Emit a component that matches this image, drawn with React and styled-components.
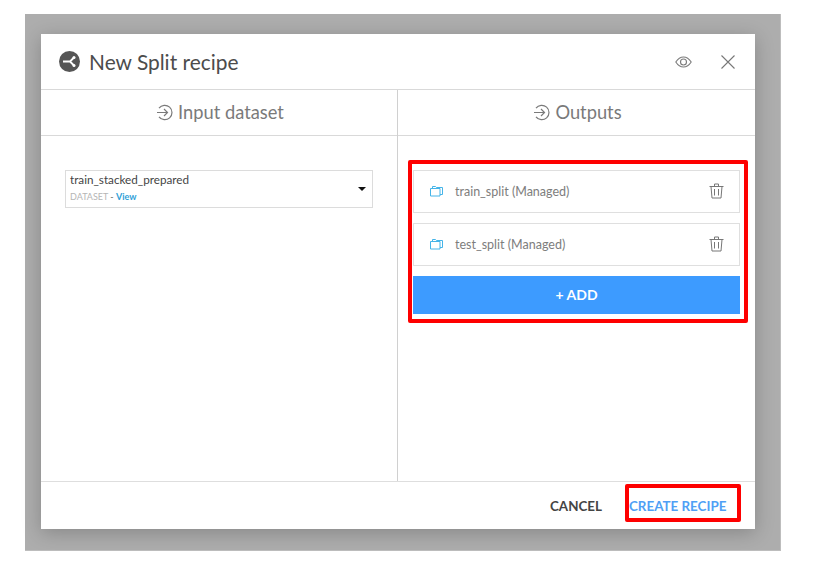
import React from 'react'
import styled, { createGlobalStyle } from 'styled-components'

const Global = createGlobalStyle`
  html, body { margin: 0; padding: 0; background: #fff; }
  body { font-family: "Lato", "Noto Sans", sans-serif; }
`

const Backdrop = styled.div`
  box-sizing: border-box;
  width: 756px;
  height: 537px;
  margin: 14px 0 0 25px;
  padding: 20px 0 0 16px;
  background: #adadad;
  border-right: 1px solid #bdbdbd;
  border-bottom: 1px solid #bdbdbd;
`

const Modal = styled.div`
  width: 714px;
  height: 495px;
  background: #fff;
  display: flex;
  flex-direction: column;
  box-shadow: 0 4px 18px rgba(0, 0, 0, 0.22);
`

const Header = styled.div`
  box-sizing: border-box;
  height: 56px;
  flex: none;
  display: flex;
  align-items: center;
  padding: 0 20px 0 18px;
  border-bottom: 1px solid #d9d9d9;
`

const Title = styled.h1`
  margin: 0 0 0 9px;
  flex: 1;
  font-size: 20.9px;
  font-weight: 400;
  color: #4c4c4c;
`

const HeaderAction = styled.button`
  border: 0;
  background: none;
  padding: 0;
  margin-left: ${(p) => p.$gap}px;
  display: flex;
  color: #7b7b7b;
`

const Columns = styled.div`
  flex: 1;
  display: grid;
  grid-template-columns: 356px 1fr;
  min-height: 0;
`

const Column = styled.section`
  display: flex;
  flex-direction: column;
  & + & { border-left: 1px solid #d0d0d0; }
`

const ColumnTitle = styled.div`
  box-sizing: border-box;
  height: 46px;
  flex: none;
  display: flex;
  align-items: center;
  justify-content: center;
  gap: 5px;
  padding: 0 0 1px 2px;
  font-size: 18.3px;
  color: #7a7a7a;
  border-bottom: 1px solid #d9d9d9;
`

const InputBody = styled.div`
  padding: 34px 24px 0;
`

const Select = styled.div`
  box-sizing: border-box;
  height: 38px;
  display: flex;
  align-items: center;
  justify-content: space-between;
  padding: 0 6px 0 4px;
  border: 1px solid #dcdcdc;
`

const SelectName = styled.div`
  font-size: 11.7px;
  line-height: 15px;
  margin-top: -3px;
  color: #444;
`

const SelectMeta = styled.div`
  font-size: 9px;
  line-height: 13px;
  margin-top: 3px;
  color: #b5b5b5;
  a { color: #2f9fd8; font-weight: 700; text-decoration: none; }
  span { color: #666; }
`

const Caret = styled.div`
  width: 0;
  height: 0;
  border-left: 4px solid transparent;
  border-right: 4px solid transparent;
  border-top: 4px solid #111;
`

const RedFrame = styled.div`
  box-sizing: border-box;
  border: 4px solid #fe0000;
  border-radius: 2px;
`

const OutputsFrame = styled(RedFrame)`
  width: 340px;
  height: 163px;
  margin: 24px 0 0 10px;
  padding: 6px 4px 0 1px;
  display: flex;
  flex-direction: column;
  gap: 10px;
`

const OutputRow = styled.div`
  box-sizing: border-box;
  height: 43px;
  flex: none;
  display: flex;
  align-items: center;
  padding: 0 15px 1px 16px;
  border: 1px solid #dfdfdf;
`

const OutputName = styled.span`
  flex: 1;
  margin-left: 12px;
  font-size: 12.5px;
  color: #7d7d7d;
`

const AddButton = styled.button`
  height: 38px;
  flex: none;
  border: 0;
  padding: 0 0 2px;
  background: #3d9bff;
  color: #fff;
  font: 700 14px "Lato", "Noto Sans", sans-serif;
`

const Footer = styled.div`
  box-sizing: border-box;
  height: 48px;
  flex: none;
  display: flex;
  align-items: center;
  justify-content: flex-end;
  padding: 0 14px 0 0;
  border-top: 1px solid #dedede;
`

const FooterButton = styled.button`
  border: 0;
  background: none;
  padding: 0;
  font: 700 13.4px "Lato", "Noto Sans", sans-serif;
  color: ${(p) => p.$color};
`

const CreateFrame = styled(RedFrame)`
  width: 116px;
  height: 38px;
  margin: 0 0 6px 23px;
  padding-top: 6px;
  display: flex;
  align-items: center;
`

const SplitIcon = () => (
  <svg width="21" height="21" viewBox="0 0 21 21">
    <circle cx="10.5" cy="10.5" r="10.5" fill="#565656" />
    <path d="M4 10.5h7M11 10.5l4-4M11 10.5l4 4" stroke="#fff" strokeWidth="1.8" fill="none" />
    <circle cx="15" cy="6.5" r="1.5" fill="#fff" />
    <circle cx="15" cy="14.5" r="1.5" fill="#fff" />
  </svg>
)

const EyeIcon = () => (
  <svg width="17" height="12" viewBox="0 0 17 12" fill="none" stroke="currentColor" strokeWidth="1.1">
    <path d="M.8 6C3 2.6 5.6 1 8.5 1s5.500 1.600 7.700 5c-2.200 3.400-4.800 5-7.700 5S3 9.400.8 6z" />
    <circle cx="8.500" cy="6" r="3" />
  </svg>
)

const CloseIcon = () => (
  <svg width="14" height="14" viewBox="0 0 14 14" stroke="#777" strokeWidth="1.1">
    <path d="M.5.5l13 13M13.500.5l-13 13" />
  </svg>
)

const EnterIcon = () => (
  <svg width="17" height="17" viewBox="0 0 17 17" fill="none" stroke="#7a7a7a" strokeWidth="1.2">
    <path d="M3 4.200A7.200 7.200 0 1 1 3 12.800" />
    <path d="M1 8.500h10.500M8 5l3.500 3.500L8 12" />
  </svg>
)

const FolderIcon = () => (
  <svg width="13" height="12" viewBox="0 0 13 12" fill="none" stroke="#45b4e8" strokeWidth="1">
    <path d="M.5 3.500h9.500v7.500H.5z" />
    <path d="M2.500 3.500V1.500h3l1 1h6v7H10" />
  </svg>
)

const TrashIcon = () => (
  <svg width="15" height="16" viewBox="0 0 15 16" fill="none" stroke="#777" strokeWidth="1">
    <path d="M.5 3.500h14M5.500 3.500v-2.500h4v2.500M2 3.500l1 11.500h9l1-11.500M5.500 6v6.500M9.500 6v6.500" />
  </svg>
)

const outputs = ['train_split (Managed)', 'test_split (Managed)']

export default function App() {
  return (
    <>
      <Global />
      <Backdrop>
        <Modal>
          <Header>
            <SplitIcon />
            <Title>New Split recipe</Title>
            <HeaderAction><EyeIcon /></HeaderAction>
            <HeaderAction $gap={29}><CloseIcon /></HeaderAction>
          </Header>
          <Columns>
            <Column>
              <ColumnTitle><EnterIcon />Input dataset</ColumnTitle>
              <InputBody>
                <Select>
                  <div>
                    <SelectName>train_stacked_prepared</SelectName>
                    <SelectMeta>DATASET <span>-</span> <a href="#view">View</a></SelectMeta>
                  </div>
                  <Caret />
                </Select>
              </InputBody>
            </Column>
            <Column>
              <ColumnTitle><EnterIcon />Outputs</ColumnTitle>
              <OutputsFrame>
                {outputs.map((name) => (
                  <OutputRow key={name}>
                    <FolderIcon />
                    <OutputName>{name}</OutputName>
                    <TrashIcon />
                  </OutputRow>
                ))}
                <AddButton>+ ADD</AddButton>
              </OutputsFrame>
            </Column>
          </Columns>
          <Footer>
            <FooterButton $color="#444">CANCEL</FooterButton>
            <CreateFrame>
              <FooterButton $color="#4f9ff5">CREATE RECIPE</FooterButton>
            </CreateFrame>
          </Footer>
        </Modal>
      </Backdrop>
    </>
  )
}
